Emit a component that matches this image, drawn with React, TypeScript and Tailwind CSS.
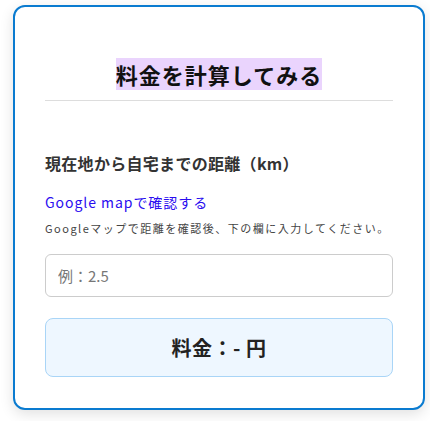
import React, { useState } from 'react';

export default function App() {
  const [distance, setDistance] = useState('');
  const km = parseFloat(distance);
  const fee = isNaN(km) ? '-' : Math.round(km * 100).toLocaleString();

  return (
    <div className="min-h-screen bg-white pt-[5px] pl-[13px]" style={{ fontFamily: '"Noto Sans CJK JP", "Noto Sans", sans-serif' }}>
      <div className="w-[412px] h-[405px] rounded-[12px] border-2 border-[#0a7bd0] bg-white px-[30px] pt-[52px] pb-[30px] shadow-[0_4px_14px_rgba(0,0,0,0.12)]">
        <div className="border-b border-[#dddddd] pb-[10px] text-center">
          <h2 className="inline bg-[#ead4fd] text-[22px] font-bold leading-[31px] tracking-[1px] text-[#111]">料金を計算してみる</h2>
        </div>

        <p className="mt-[50px] text-[16px] font-bold leading-[24px] tracking-[0.3px] text-[#333]">現在地から自宅までの距離（km）</p>

        <a href="#" className="mt-[17px] block text-[14px] leading-[21px] tracking-[0.95px] text-[#2a0cf0]">Google mapで確認する</a>
        <p className="mt-[7px] text-[11px] leading-[16px] tracking-[1.5px] text-[#444]">Googleマップで距離を確認後、下の欄に入力してください。</p>

        <input
          value={distance}
          onChange={e => setDistance(e.target.value)}
          placeholder="例：2.5"
          className="mt-[18px] block h-[43px] w-full rounded-[6px] border border-[#cccccc] px-[12px] text-[15px] text-[#333] placeholder:text-[#777] outline-none"
        />

        <div className="mt-[21px] flex h-[59px] items-center justify-center rounded-[8px] border border-[#a9d5f7] bg-[#eef7ff]">
          <span className="text-[20px] font-bold tracking-[0.5px] text-[#222]">料金：{fee} 円</span>
        </div>
      </div>
    </div>
  );
}
